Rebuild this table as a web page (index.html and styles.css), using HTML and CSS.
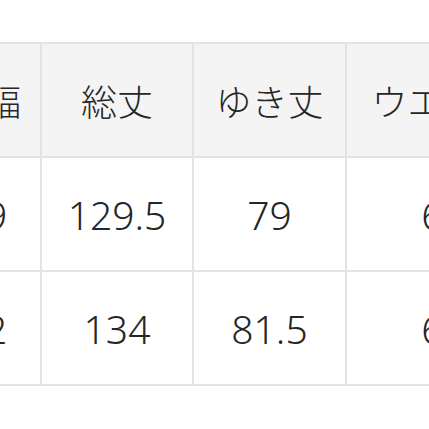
FILE: index.html
```html
<!DOCTYPE html>
<html lang="ja">
<head>
<meta charset="utf-8">
<link rel="stylesheet" href="styles.css">
</head>
<body>
<div class="frame">
  <table class="size-table">
    <colgroup>
      <col class="c0"><col class="c1"><col class="c2"><col class="c3">
    </colgroup>
    <thead>
      <tr><th>身幅</th><th>総丈</th><th>ゆき丈</th><th>ウエスト</th></tr>
    </thead>
    <tbody>
      <tr><td>59</td><td>129.5</td><td>79</td><td>64</td></tr>
      <tr><td>62</td><td>134</td><td>81.5</td><td>66</td></tr>
    </tbody>
  </table>
</div>
</body>
</html>
```

FILE: styles.css
```css
html, body {
  margin: 0;
  padding: 0;
  background: #ffffff;
}
.frame {
  width: 429px;
  height: 429px;
  overflow: hidden;
  padding-top: 42px;
  box-sizing: border-box;
}
.size-table {
  border-collapse: collapse;
  table-layout: fixed;
  width: 612px;
  margin-left: -72px;
  color: #262626;
  font-family: "Noto Sans", "Noto Sans CJK JP", sans-serif;
}
.c0 { width: 112px; }
.c1 { width: 152px; }
.c2 { width: 153px; }
.c3 { width: 195px; }
.size-table th,
.size-table td {
  border: 2px solid #e3e3e3;
  text-align: center;
  vertical-align: middle;
  padding: 0;
  white-space: nowrap;
  overflow: hidden;
}
.size-table th {
  background: #f4f4f4;
  font-family: "Noto Sans CJK JP", sans-serif;
  font-weight: 300;
  font-size: 36px;
  height: 112px;
}
.size-table td {
  background: #ffffff;
  font-weight: 300;
  font-size: 39px;
  height: 112px;
}
```
